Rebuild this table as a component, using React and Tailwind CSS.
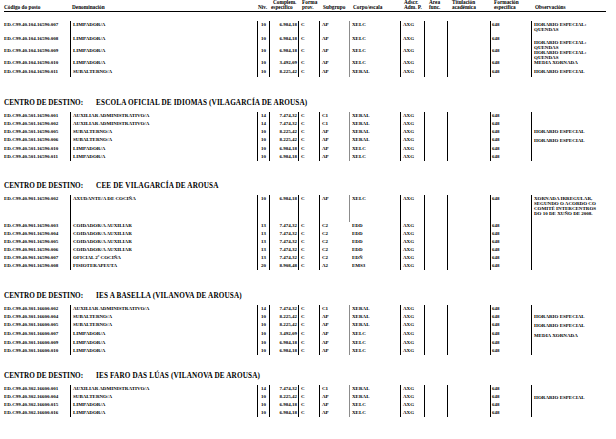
import React from "react";

const S1 = [
  { h: "h-[14px]", code: "ED.C99.40.104.16590.007", den: "LIMPADOR/A", niv: "10", comp: "6.984,18", sub: "AP", corpo: "XELC", obs: ["HORARIO ESPECIAL:", "QUENDAS"], op: "pt-[1px]" },
  { h: "h-[12px]", code: "ED.C99.40.104.16590.008", den: "LIMPADOR/A", niv: "10", comp: "6.984,18", sub: "AP", corpo: "XELC", obs: ["HORARIO ESPECIAL:", "QUENDAS"], op: "pt-[5px]" },
  { h: "h-[12px]", code: "ED.C99.40.104.16590.009", den: "LIMPADOR/A", niv: "10", comp: "6.984,18", sub: "AP", corpo: "XELC", obs: ["HORARIO ESPECIAL:", "QUENDAS"], op: "pt-[3px]" },
  { h: "h-[9px]", code: "ED.C99.40.104.16590.010", den: "LIMPADOR/A", niv: "10", comp: "3.492,09", sub: "AP", corpo: "XELC", obs: ["MEDIA XORNADA"], op: "pt-[1px]" },
  { h: "h-[9px]", code: "ED.C99.40.104.16590.011", den: "SUBALTERNO/A", niv: "10", comp: "8.225,42", sub: "AP", corpo: "XERAL", obs: ["HORARIO ESPECIAL"], op: "pt-[1px]" },
];

const S2 = [
  { h: "h-[8px]", code: "ED.C99.40.501.16590.001", den: "AUXILIAR ADMINISTRATIVO/A", niv: "14", comp: "7.474,32", sub: "C1", corpo: "XERAL", obs: [], op: "pt-[1px]" },
  { h: "h-[8px]", code: "ED.C99.40.501.16590.002", den: "AUXILIAR ADMINISTRATIVO/A", niv: "14", comp: "7.474,32", sub: "C1", corpo: "XERAL", obs: [], op: "pt-[1px]" },
  { h: "h-[8px]", code: "ED.C99.40.501.16590.005", den: "SUBALTERNO/A", niv: "10", comp: "8.225,42", sub: "AP", corpo: "XERAL", obs: ["HORARIO ESPECIAL"], op: "pt-[1px]" },
  { h: "h-[9px]", code: "ED.C99.40.501.16590.006", den: "SUBALTERNO/A", niv: "10", comp: "8.225,42", sub: "AP", corpo: "XERAL", obs: ["HORARIO ESPECIAL"], op: "pt-[1.5px]" },
  { h: "h-[8px]", code: "ED.C99.40.501.16590.010", den: "LIMPADOR/A", niv: "10", comp: "6.984,18", sub: "AP", corpo: "XELC", obs: [], op: "pt-[1px]" },
  { h: "h-[8px]", code: "ED.C99.40.501.16590.011", den: "LIMPADOR/A", niv: "10", comp: "6.984,18", sub: "AP", corpo: "XELC", obs: [], op: "pt-[1px]" },
];

const S3 = [
  { h: "h-[27px]", code: "ED.C99.40.901.16590.002", den: "AXUDANTE/A DE COCIÑA", niv: "10", comp: "6.984,18", sub: "AP", corpo: "XELC", obs: ["XORNADA IRREGULAR,", "SEGUNDO O ACORDO CO", "COMITÉ INTERCENTROS", "DO 10 DE XUÑO DE 2008."], op: "pt-[1px]" },
  { h: "h-[8px]", code: "ED.C99.40.901.16590.003", den: "COIDADOR/A AUXILIAR", niv: "13", comp: "7.474,32", sub: "C2", corpo: "EDD", noGray: true, obs: [], op: "pt-[1px]" },
  { h: "h-[8px]", code: "ED.C99.40.901.16590.004", den: "COIDADOR/A AUXILIAR", niv: "13", comp: "7.474,32", sub: "C2", corpo: "EDD", noGray: true, obs: [], op: "pt-[1px]" },
  { h: "h-[8px]", code: "ED.C99.40.901.16590.005", den: "COIDADOR/A AUXILIAR", niv: "13", comp: "7.474,32", sub: "C2", corpo: "EDD", noGray: true, obs: [], op: "pt-[1px]" },
  { h: "h-[8px]", code: "ED.C99.40.901.16590.006", den: "COIDADOR/A AUXILIAR", niv: "13", comp: "7.474,32", sub: "C2", corpo: "EDD", noGray: true, obs: [], op: "pt-[1px]" },
  { h: "h-[8px]", code: "ED.C99.40.901.16590.007", den: "OFICIAL 2ª COCIÑA", niv: "13", comp: "7.474,32", sub: "C2", corpo: "EDÑ", noGray: true, obs: [], op: "pt-[1px]" },
  { h: "h-[8px]", code: "ED.C99.40.901.16590.008", den: "FISIOTERAPEUTA", niv: "20", comp: "8.908,48", sub: "A2", corpo: "EMS3", noGray: true, obs: [], op: "pt-[1px]" },
];

const S4 = [
  { h: "h-[8px]", code: "ED.C99.40.301.16600.002", den: "AUXILIAR ADMINISTRATIVO/A", niv: "14", comp: "7.474,32", sub: "C1", corpo: "XERAL", obs: [], op: "pt-[1px]" },
  { h: "h-[8px]", code: "ED.C99.40.301.16600.004", den: "SUBALTERNO/A", niv: "10", comp: "8.225,42", sub: "AP", corpo: "XERAL", obs: ["HORARIO ESPECIAL"], op: "pt-[1px]" },
  { h: "h-[9px]", code: "ED.C99.40.301.16600.005", den: "SUBALTERNO/A", niv: "10", comp: "8.225,42", sub: "AP", corpo: "XERAL", obs: ["HORARIO ESPECIAL"], op: "pt-[1.5px]" },
  { h: "h-[9px]", code: "ED.C99.40.301.16600.007", den: "LIMPADOR/A", niv: "10", comp: "3.492,09", sub: "AP", corpo: "XELC", obs: ["MEDIA XORNADA"], op: "pt-[2.5px]" },
  { h: "h-[8px]", code: "ED.C99.40.301.16600.009", den: "LIMPADOR/A", niv: "10", comp: "6.984,18", sub: "AP", corpo: "XELC", obs: [], op: "pt-[1px]" },
  { h: "h-[8px]", code: "ED.C99.40.301.16600.010", den: "LIMPADOR/A", niv: "10", comp: "6.984,18", sub: "AP", corpo: "XELC", obs: [], op: "pt-[1px]" },
];

const S5 = [
  { h: "h-[8px]", code: "ED.C99.40.302.16600.001", den: "AUXILIAR ADMINISTRATIVO/A", niv: "14", comp: "7.474,32", sub: "C1", corpo: "XERAL", obs: [], op: "pt-[1px]" },
  { h: "h-[8px]", code: "ED.C99.40.302.16600.004", den: "SUBALTERNO/A", niv: "10", comp: "8.225,42", sub: "AP", corpo: "XERAL", obs: ["HORARIO ESPECIAL"], op: "pt-[1.5px]" },
  { h: "h-[8px]", code: "ED.C99.40.302.16600.015", den: "LIMPADOR/A", niv: "10", comp: "6.984,18", sub: "AP", corpo: "XELC", obs: [], op: "pt-[1px]" },
  { h: "h-[8px]", code: "ED.C99.40.302.16600.016", den: "LIMPADOR/A", niv: "10", comp: "6.984,18", sub: "AP", corpo: "XELC", obs: [], op: "pt-[1px]" },
];

function Row({ r }) {
  return (
    <div className={"flex " + r.h}>
      <div className="w-[70px] shrink-0 pl-[4px] pt-[1px]">{r.code}</div>
      <div className="w-[187px] shrink-0 border-l border-black pl-[2px] pt-[1px]">{r.den}</div>
      <div className="w-[12px] shrink-0 border-l border-black pt-[1px] text-center">{r.niv}</div>
      <div className="w-[29px] shrink-0 border-l border-black pr-[1px] pt-[1px] text-right">{r.comp}</div>
      <div className="w-[21px] shrink-0 border-l border-black pl-[2px] pt-[1px]">C</div>
      <div className="w-[30px] shrink-0 border-l border-black pl-[2px] pt-[1px]">{r.sub}</div>
      <div className={"w-[51px] shrink-0 border-l pl-[2px] pt-[1px] " + (r.noGray ? "border-transparent" : "border-[#8c8c8c]")}>{r.corpo}</div>
      <div className="w-[24px] shrink-0 border-l border-black pl-[2px] pt-[1px]">AXG</div>
      <div className="w-[23px] shrink-0 border-l border-black"></div>
      <div className="w-[43px] shrink-0 border-l border-black"></div>
      <div className="w-[41px] shrink-0 border-l border-black pl-[1px] pt-[1px]">648</div>
      <div className={"flex-1 border-l border-black pl-[2px] " + r.op}>
        {r.obs.map((o, i) => (
          <div key={i}>{o}</div>
        ))}
      </div>
    </div>
  );
}

function SectionHead({ name, cls }) {
  return (
    <div className={"pl-[4px] text-[7.2px] leading-[8px] " + cls}>
      <span>CENTRO DE DESTINO:</span>
      <span className="ml-[13px] tracking-[0.15px]">{name}</span>
    </div>
  );
}

export default function App() {
  return (
    <div
      className="relative h-[439px] w-[616px] overflow-hidden bg-white font-bold text-black text-[5px] leading-[5px] whitespace-nowrap"
      style={{ fontFamily: '"Liberation Serif", "Times New Roman", serif' }}
    >
      {/* column header */}
      <div className="ml-[4px] flex h-[12px] w-[602px] border-b border-black pt-[0.5px] text-[5.3px]">
        <div className="flex w-[66px] shrink-0 flex-col justify-end pb-[1px]">Código do posto</div>
        <div className="flex w-[187px] shrink-0 flex-col justify-end pb-[1px] pl-[2px]">Denominación</div>
        <div className="flex w-[14px] shrink-0 flex-col justify-end pb-[1px] pl-[1px]">Niv.</div>
        <div className="flex w-[29px] shrink-0 flex-col justify-end pb-[1px]">
          <div className="pl-[2px]">Complem.</div>
          <div>específico</div>
        </div>
        <div className="flex w-[21px] shrink-0 flex-col justify-end pb-[1px] pl-[2px]">
          <div>Forma</div>
          <div>prov.</div>
        </div>
        <div className="flex w-[30px] shrink-0 flex-col justify-end pb-[1px] pl-[2px]">Subgrupo</div>
        <div className="flex w-[51px] shrink-0 flex-col justify-end pb-[1px] pl-[2px]">Corpo/escala</div>
        <div className="flex w-[25px] shrink-0 flex-col justify-end pb-[1px] pl-[2px]">
          <div>Adscr.</div>
          <div>Adm. P.</div>
        </div>
        <div className="flex w-[23px] shrink-0 flex-col justify-end pb-[1px] pl-[2px]">
          <div>Área</div>
          <div>func.</div>
        </div>
        <div className="flex w-[43px] shrink-0 flex-col justify-end pb-[1px] pl-[2px]">
          <div>Titulación</div>
          <div>académica</div>
        </div>
        <div className="flex w-[41px] shrink-0 flex-col justify-end pb-[1px] pl-[1px]">
          <div>Formación</div>
          <div>específica</div>
        </div>
        <div className="flex flex-1 flex-col justify-end pb-[1px] pl-[1px]">Observacións</div>
      </div>

      <div className="mt-[9px]">
        {S1.map((r) => (
          <Row key={r.code} r={r} />
        ))}
      </div>

      <SectionHead cls="mt-[22px] mb-[5px]" name="ESCOLA OFICIAL DE IDIOMAS (VILAGARCÍA DE AROUSA)" />
      <div>
        {S2.map((r) => (
          <Row key={r.code} r={r} />
        ))}
      </div>

      <SectionHead cls="mt-[21px] mb-[5px]" name="CEE DE VILAGARCÍA DE AROUSA" />
      <div>
        {S3.map((r) => (
          <Row key={r.code} r={r} />
        ))}
      </div>

      <SectionHead cls="mt-[22px] mb-[5px]" name="IES A BASELLA (VILANOVA DE AROUSA)" />
      <div>
        {S4.map((r) => (
          <Row key={r.code} r={r} />
        ))}
      </div>

      <SectionHead cls="mt-[17px] mb-[5px]" name="IES FARO DAS LÚAS (VILANOVA DE AROUSA)" />
      <div>
        {S5.map((r) => (
          <Row key={r.code} r={r} />
        ))}
      </div>
    </div>
  );
}
